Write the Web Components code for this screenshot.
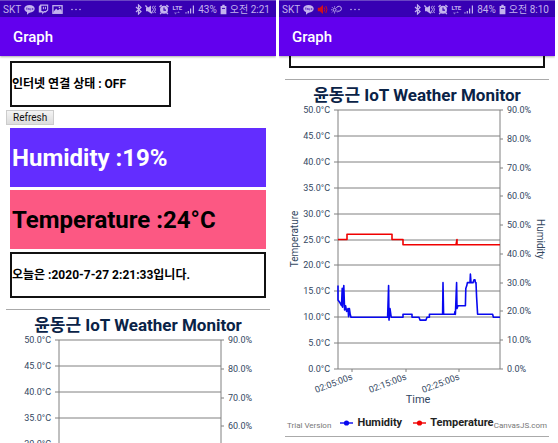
<!DOCTYPE html>
<html lang="ko">
<head>
<meta charset="utf-8">
<title>Graph</title>
<style>
  body {
    margin: 0;
    height: 100vh;
    overflow: hidden;
    display: grid;
    grid-template-columns: 1fr 1fr;
    gap: 3px;
    padding-right: 3px;
    box-sizing: border-box;
    background: #fff;
    font-family: Roboto, "Noto Sans CJK KR", sans-serif;
    color: #000;
  }
</style>
</head>
<body>

<phone-screen heading="Graph">
  <status-bar slot="status" carrier="SKT" notices="talk twitch image" battery="43%" time="오전 2:21"></status-bar>
  <info-card class="short">인터넷 연결 상태 : OFF</info-card>
  <refresh-button>Refresh</refresh-button>
  <reading-card tone="humidity">Humidity :19%</reading-card>
  <reading-card tone="temperature">Temperature :24°C</reading-card>
  <info-card>오늘은 :2020-7-27 2:21:33입니다.</info-card>
  <weather-chart heading="윤동근 IoT Weather Monitor" min-temperature="30" min-humidity="60"></weather-chart>
</phone-screen>

<phone-screen heading="Graph">
  <status-bar slot="status" carrier="SKT" notices="talk speaker weather" battery="84%" time="오전 8:10"></status-bar>
  <info-card scrolled></info-card>
  <weather-chart heading="윤동근 IoT Weather Monitor" live></weather-chart>
</phone-screen>

<script>
const icons = {
  talk: `<svg width="11" height="11" viewBox="0 0 11 11"><ellipse cx="5.5" cy="4.8" rx="5.2" ry="3.9" fill="currentColor"/><path d="M3 8v2.8L6 8z" fill="currentColor"/><path d="M2 4h1.6M2.8 4v2M4.2 6l.6-2 .6 2M6.2 4v2h.9M8.2 4v2M9.3 4 8.3 5l1 1" stroke="#3700b3" stroke-width=".5" fill="none"/></svg>`,
  twitch: `<svg width="11" height="11" viewBox="0 0 11 11"><path d="M.8 2.6 2.4.6h7.8v5.6L7.8 8.6H6L4.2 10.4V8.6H.8z" fill="currentColor"/><path d="M3.4 1.7h5.7v4L7.8 7H6L4.8 8V7H3.4z" fill="#3700b3"/><path d="M5.4 2.8v2.4M7.4 2.8v2.4" stroke="currentColor"/></svg>`,
  image: `<svg width="11" height="11" viewBox="0 0 11 11"><rect x=".9" y="1.7" width="9.2" height="7.6" fill="none" stroke="currentColor" stroke-width="1.3"/><path d="M1.5 7.8 4.2 4.4l1.6 1.8L8 4.8l1.8 2V9H1.5z" fill="currentColor"/><circle cx="7.4" cy="3.5" r=".8" fill="currentColor"/></svg>`,
  speaker: `<svg width="11" height="11" viewBox="0 0 11 11" style="color:#d0101c"><path d="M.8 3.8h2L6 1v9L2.8 7.2h-2z" fill="currentColor"/><path d="M7.2 3.4q1.4 2 0 4.2M8.8 2q2.4 3.5 0 7" stroke="currentColor" fill="none"/></svg>`,
  weather: `<svg width="11" height="11" viewBox="0 0 11 11"><circle cx="3.6" cy="5.8" r="1.5" fill="none" stroke="currentColor" stroke-width=".9"/><path d="M3.6 2.2v1.3M3.6 8.1v1.4M0 5.8h1.3M1 3.2l1 1M1 8.4l1-1M6.2 8.4l-1-1" stroke="currentColor" stroke-width=".8"/><path d="M5.5 4a2.5 2.5 0 1 1 2.6 3.2H6.2" fill="none" stroke="currentColor"/></svg>`,
  more: `<svg width="12" height="11" viewBox="0 0 12 11"><g fill="currentColor"><circle cx="2" cy="5.5" r=".8"/><circle cx="6" cy="5.5" r=".8"/><circle cx="10" cy="5.5" r=".8"/></g></svg>`,
  bluetooth: `<svg width="7" height="11" viewBox="0 0 7 11"><path d="M1 3l5 4.6L3.5 10V1L6 3.4 1 8" fill="none" stroke="currentColor" stroke-width="1.2"/></svg>`,
  mute: `<svg width="11" height="11" viewBox="0 0 11 11"><path d="M1 3.8h1.8L6 1.4v8.2L2.8 7.2H1z" fill="currentColor"/><path d="M.4 1.4 7 9.4" stroke="currentColor" stroke-width="1.4"/><path d="M8.4 1.8l-1 1.8 1.3 1.9-1.3 1.8 1 1.8M10.5 1.8l-.9 1.8 1 1.9-1 1.8.9 1.8" stroke="currentColor" fill="none"/></svg>`,
  alarm: `<svg width="10" height="11" viewBox="0 0 10 11"><circle cx="5" cy="5.8" r="4" fill="currentColor"/><path d="M5 3.4v2.7h2" stroke="#3700b3" fill="none" stroke-width="1.1"/><path d="M.5 3 2.6 1M9.5 3 7.4 1M2.4 8.6 1.2 10.2M7.6 8.6 8.8 10.2" stroke="currentColor" stroke-width="1.4"/></svg>`,
  arrows: `<svg width="8" height="4" viewBox="0 0 8 4"><path d="M2.5 0v2M1 1.5h3L2.5 3.4zM5.5 4V2M4.2 2h2.6L5.5.2z" fill="currentColor" opacity=".6"/></svg>`,
  signal: `<svg width="10" height="11" viewBox="0 0 10 11"><path d="M1 9.5V8.2M3.3 9.5V7M5.6 9.5V4.5M8.4 9.5V1.4" stroke="currentColor" stroke-width="1.2"/></svg>`,
  battery: `<svg width="7" height="11" viewBox="0 0 7 11"><path d="M2.3.8h2.4v1.1h1.7v8.3H.6V1.9h1.7z" fill="currentColor"/><path d="M2 4.4h3" stroke="#3700b3" stroke-width="1"/></svg>`
};

function mount(host, markup) {
  host.attachShadow({ mode: "open" }).innerHTML = markup;
}

customElements.define("status-bar", class extends HTMLElement {
  connectedCallback() {
    const notices = this.getAttribute("notices").split(" ").map(n => icons[n]).join("");
    mount(this, `
      <style>
        :host { display: flex; justify-content: space-between; align-items: center; box-sizing: border-box;
          height: 17px; padding: 1px 6px 0 3px; border-top: 1px solid #6a45c4;
          background: #3700b3; color: #c3b2ee; font-size: 10px; line-height: 12px; white-space: nowrap; }
        div { display: flex; align-items: center; gap: 3px; }
        svg { display: block; flex: none; }
        .more { margin-left: 4px; }
        .lte { flex-direction: column; gap: 0; font-size: 6px; line-height: 6px; font-weight: 700; margin-left: 1px; }
      </style>
      <div><span>${this.getAttribute("carrier")}</span>${notices}<span class="more">${icons.more}</span></div>
      <div>${icons.bluetooth}${icons.mute}${icons.alarm}
        <div class="lte">LTE${icons.arrows}</div>${icons.signal}
        <span>${this.getAttribute("battery")}</span>${icons.battery}<span>${this.getAttribute("time")}</span></div>`);
  }
});

customElements.define("phone-screen", class extends HTMLElement {
  connectedCallback() {
    mount(this, `
      <style>
        :host { display: flex; flex-direction: column; min-width: 0; min-height: 0; overflow: hidden; background: #fff; }
        header { flex: none; display: flex; align-items: center; height: 39px; padding: 0 13px;
          background: #6200ee; color: #fff; box-shadow: 0 1px 2px #0005; z-index: 1; }
        h1 { margin: 0; font-size: 15px; line-height: 20px; font-weight: 500; }
        main { flex: 1; min-height: 0; padding: 0 6px; overflow: hidden; display: flow-root; }
      </style>
      <slot name="status"></slot>
      <header><h1>${this.getAttribute("heading")}</h1></header>
      <main><slot></slot></main>`);
  }
});

customElements.define("info-card", class extends HTMLElement {
  connectedCallback() {
    mount(this, `
      <style>
        :host { display: flex; align-items: center; box-sizing: border-box; height: 46px; margin: 3px 4px;
          border: 2px solid #111; font-size: 12px; line-height: 16px; font-weight: 700; }
        :host(.short) { width: 61%; margin-top: 5px; }
        :host([scrolled]) { height: 12px; margin-top: 0; border-top: 0; }
      </style>
      <slot></slot>`);
  }
});

customElements.define("refresh-button", class extends HTMLElement {
  connectedCallback() {
    mount(this, `
      <style>
        :host { display: flex; }
        button { margin: 0; padding: 0 6px; height: 15px; border: 1px solid #ccc; background: linear-gradient(#f4f4f4, #dcdcdc);
          font: 10px/13px Roboto, sans-serif; color: #111; }
      </style>
      <button type="button"><slot></slot></button>`);
  }
});

customElements.define("reading-card", class extends HTMLElement {
  connectedCallback() {
    mount(this, `
      <style>
        :host { display: flex; align-items: center; box-sizing: border-box; height: 59px; margin: 3px 4px; padding-left: 2px;
          font-size: 24px; line-height: 28px; font-weight: 700; }
        :host([tone="humidity"]) { background: #632dff; color: #fff; }
        :host([tone="temperature"]) { background: #fc5883; color: #000; }
      </style>
      <slot></slot>`);
  }
});

/* Plot area in drawing units. */
const plot = { left: 53, right: 215, top: 31, bottom: 290 };
const height = plot.bottom - plot.top;
const tempY = t => plot.bottom - t / 50 * height;
const humY = h => plot.bottom - h / 90 * height;

/* Samples: [x, value]. */
const temperature = [[53,25],[62,25],[62,26],[107,26],[107,25],[118,25],[118,24],[171,24],[172,25],[172,24],[215,24]];
const humidity = [[53,29],[53,24],[55,23],[56.5,22],[57.2,28],[57.6,21.5],[58.8,29],[59.6,20.5],[60.6,22],[61.6,20],[63,21],[63.6,18.2],
  [64.4,21],[65.2,19],[66,18],[102.6,18],[103.6,29],[104,17],[105,21],[106.2,18],[118,18],[118,19],[127,19],[127,18],[134,18],
  [135,17],[141,17],[142,18],[144.4,18],[144.4,19],[157.6,19],[158,30],[158.6,19],[169.4,19],[170,20],[170.4,19],[171.6,30],
  [172,21],[173,22],[180.4,22],[180.8,28],[181.8,29],[182.4,30],[185,30],[185.4,33],[186,30],[188,30],[189,31],[190,31],
  [190.4,30],[191,30],[191.6,25],[192.6,19],[207.6,19],[208.4,18],[215,18]];
const line = (data, y) => data.map(([x, v]) => x + "," + y(v).toFixed(2)).join(" ");

/* Without "live" only the axes are drawn, down to the given minimum values. */
customElements.define("weather-chart", class extends HTMLElement {
  connectedCallback() {
    const live = this.hasAttribute("live");
    let grid = "", labels = "";
    for (let t = Number(this.getAttribute("min-temperature")); t <= 50; t += 5) {
      const y = Math.round(tempY(t));
      grid += `<path d="M49 ${y}H${plot.right}"/>`;
      labels += `<text x="45" y="${y + 3}" text-anchor="end">${t.toFixed(1)}°C</text>`;
    }
    for (let h = Number(this.getAttribute("min-humidity")); h <= 90; h += 10) {
      const y = Math.round(humY(h));
      grid += `<path d="M${plot.right} ${y}h3"/>`;
      labels += `<text x="222" y="${y + 3}">${h.toFixed(1)}%</text>`;
    }
    let series = "", footer = "";
    if (live) {
      [["02:05:00s", 67], ["02:15:00s", 121], ["02:25:00s", 174]].forEach(([label, x]) => {
        grid += `<path d="M${x} ${plot.bottom}v3"/>`;
        labels += `<text transform="translate(${x + 1} 300) rotate(-21)" text-anchor="end">${label}</text>`;
      });
      labels += `
        <g font-size="10" text-anchor="middle">
          <text transform="translate(13 160) rotate(-90)">Temperature</text>
          <text transform="translate(252 160) rotate(90)">Humidity</text>
          <text x="133" y="324" font-size="11">Time</text>
        </g>`;
      series = `
        <g fill="none" stroke-width="1.6" stroke-linejoin="round">
          <polyline stroke="#f00000" points="${line(temperature, tempY)}"/>
          <polyline stroke="#0808f0" points="${line(humidity, humY)}"/>
        </g>`;
      const key = color => `<svg width="13" height="6" viewBox="0 0 13 6"><path d="M0 3h13" stroke="${color}" stroke-width="1.4"/><circle cx="6.5" cy="3" r="2.6" fill="${color}"/></svg>`;
      footer = `
        <footer>
          <span class="note">Trial Version</span>
          <div class="legend"><span>${key("#0808f0")}Humidity</span><span>${key("#f00000")}Temperature</span></div>
          <a class="note credit" href="#">CanvasJS.com</a>
        </footer>`;
    }
    mount(this, `
      <style>
        :host { display: block; margin-top: 11px; border-top: 1px solid #aaa; border-bottom: 1px solid #aaa; }
        h2 { margin: 0; height: 25px; font-size: 17px; line-height: 30px; font-weight: 700; color: #0a2347;
          text-align: center; white-space: nowrap; }
        .plot { display: block; width: 100%; overflow: visible; }
        footer { display: grid; grid-template-columns: 1fr; align-items: center; height: 27px; padding: 0 2px; white-space: nowrap; }
        footer > * { grid-area: 1 / 1; }
        .note { font-size: 8px; line-height: 12px; color: #777; padding-top: 6px; }
        .credit { justify-self: end; text-decoration: none; }
        .legend { justify-self: center; display: flex; gap: 11px; font-size: 11px; line-height: 14px; font-weight: 700; color: #222; }
        .legend span { display: flex; align-items: center; gap: 4px; }
      </style>
      <h2>${this.getAttribute("heading")}</h2>
      <svg class="plot" viewBox="0 26 264 304" font-family="Roboto, sans-serif" font-size="9" fill="#33475f">
        <g stroke="#808080" stroke-width="1" fill="none">${grid}
          <path d="M${plot.left} ${plot.top}V${plot.bottom}M${plot.right} ${plot.top}V${plot.bottom}"/></g>
        ${labels}
        ${series}
      </svg>
      ${footer}`);
  }
});
</script>
</body>
</html>
